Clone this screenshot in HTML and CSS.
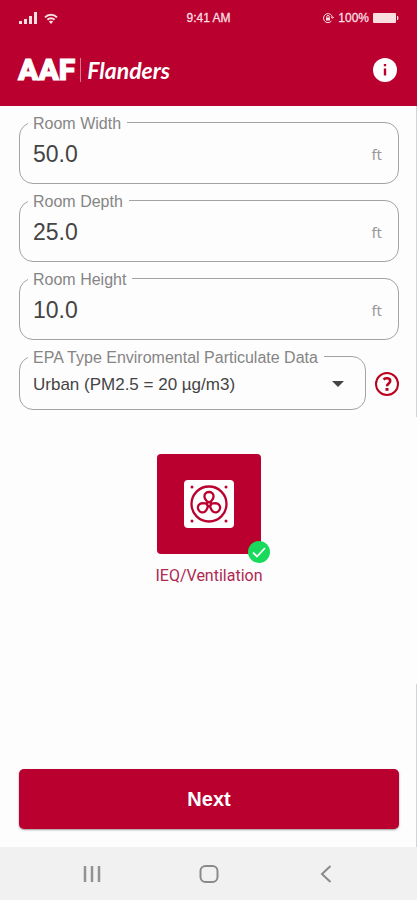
FILE: index.html
```
<!DOCTYPE html>
<html lang="en">
<head>
  <meta charset="UTF-8">
  <meta name="viewport" content="width=device-width, initial-scale=1">
  <title>AAF Flanders - Room Setup</title>
  <link rel="stylesheet" href="styles.css">
</head>
<body>
  <header>
    <div class="status-bar">
      <div class="status-left">
        <svg width="20" height="12" viewBox="0 0 20 12" fill="currentColor" aria-hidden="true">
          <rect x="1" y="9" width="3" height="3"/>
          <rect x="6" y="7" width="3" height="5"/>
          <rect x="11" y="4" width="3" height="8"/>
          <rect x="16" y="0" width="3" height="12"/>
        </svg>
        <svg width="14" height="11" viewBox="0 0 14 11" fill="none" stroke="currentColor" stroke-width="2" aria-hidden="true">
          <path d="M1 4.400C4.400.8 9.600.8 13 4.400"/>
          <path d="M3.400 6.800C5.500 4.800 8.500 4.800 10.600 6.800"/>
          <path d="M7 11L4.800 8.600C6 7.500 8 7.500 9.200 8.600Z" fill="currentColor" stroke="none"/>
        </svg>
      </div>
      <span class="time">9:41 AM</span>
      <div class="status-right">
        <svg width="12" height="12" viewBox="0 0 12 12" fill="none" stroke="currentColor" aria-hidden="true">
          <path d="M9.500 9A4.500 4.500 0 1 1 10.500 5.500M8.800 4.800L10.500 6.300L12 4.800"/>
          <rect x="4" y="5.500" width="4" height="3" fill="currentColor" stroke="none"/>
          <path d="M4.800 5.500V4.600A1.200 1.200 0 0 1 7.200 4.600V5.500"/>
        </svg>
        <span>100%</span>
        <svg width="26" height="10" viewBox="0 0 26 10" fill="currentColor" aria-hidden="true">
          <rect width="23" height="10" rx="1"/>
          <path d="M24 3H25Q26 5 25 7H24Z"/>
        </svg>
      </div>
    </div>
    <div class="title-bar">
      <div class="logo">
        <span class="logo-aaf">AAF</span>
        <span class="logo-flanders">Flanders</span>
      </div>
      <button class="icon-btn" type="button" aria-label="Info">
        <svg width="24" height="24" viewBox="0 0 24 24" aria-hidden="true">
          <circle cx="12" cy="12" r="12" fill="#fff"/>
          <path d="M10.800 6H13.200V8.300H10.800ZM10.800 10.500H13.200V17.500H10.800Z" fill="#ba002f"/>
        </svg>
      </button>
    </div>
  </header>

  <main>
    <fieldset class="field">
      <legend><label for="roomWidth">Room Width</label></legend>
      <input id="roomWidth" type="text" inputmode="decimal" value="50.0">
      <span class="unit">ft</span>
    </fieldset>
    <fieldset class="field">
      <legend><label for="roomDepth">Room Depth</label></legend>
      <input id="roomDepth" type="text" inputmode="decimal" value="25.0">
      <span class="unit">ft</span>
    </fieldset>
    <fieldset class="field">
      <legend><label for="roomHeight">Room Height</label></legend>
      <input id="roomHeight" type="text" inputmode="decimal" value="10.0">
      <span class="unit">ft</span>
    </fieldset>

    <div class="select-row">
      <fieldset class="field field-select">
        <legend><label for="epaType">EPA Type Enviromental Particulate Data</label></legend>
        <select id="epaType">
          <option>Urban (PM2.5 = 20 µg/m3)</option>
        </select>
        <svg class="arrow" width="12" height="6" viewBox="0 0 12 6" aria-hidden="true">
          <path d="M0 0H12L6 6Z" fill="#444"/>
        </svg>
      </fieldset>
      <button class="icon-btn help" type="button" aria-label="Help">
        <svg width="24" height="24" viewBox="0 0 24 24" fill="none" stroke="#ba0020" aria-hidden="true">
          <circle cx="12" cy="12" r="11" stroke-width="2"/>
          <path d="M8.500 7.400C10.500 5.800 15.200 5.600 15.200 8.900C15.200 11.500 12 11.400 12 14.300" stroke-width="2.600"/>
          <path d="M12 16V18.800" stroke-width="3"/>
        </svg>
      </button>
    </div>

    <button class="category" type="button" aria-pressed="true">
      <span class="tile">
        <svg width="50" height="48" viewBox="0 0 50 48" aria-hidden="true">
          <rect width="50" height="48" rx="4" fill="#fff"/>
          <g fill="#ba002f">
            <circle cx="8" cy="7" r="1.500"/>
            <circle cx="42" cy="7" r="1.500"/>
            <circle cx="8" cy="41" r="1.500"/>
            <circle cx="42" cy="41" r="1.500"/>
          </g>
          <g fill="none" stroke="#ba002f" stroke-width="2.300">
            <circle cx="25" cy="24" r="17.500"/>
            <path id="blade" d="M24 23C23.500 21 20.400 19.500 20.400 16.500C20.400 10.500 29.600 10.500 29.600 16.500C29.600 19.500 26.500 21 26 23"/>
            <use href="#blade" transform="rotate(120 25 24)"/>
            <use href="#blade" transform="rotate(240 25 24)"/>
            <circle cx="25" cy="24" r="2"/>
          </g>
        </svg>
        <svg class="check" width="22" height="22" viewBox="0 0 22 22" aria-hidden="true">
          <circle cx="11" cy="11" r="11" fill="#18db5b"/>
          <path d="M5 11.500L9 15.500L17 7" fill="none" stroke="#fff" stroke-width="1.800"/>
        </svg>
      </span>
      <span>IEQ/Ventilation</span>
    </button>

    <button class="next" type="button">Next</button>
  </main>

  <nav>
    <button type="button" aria-label="Recent apps">
      <svg width="20" height="18" viewBox="0 0 20 18" stroke="#929292" stroke-width="2.500" aria-hidden="true">
        <path d="M3 1V17M10 1V17M17 1V17"/>
      </svg>
    </button>
    <button type="button" aria-label="Home">
      <svg width="20" height="18" viewBox="0 0 20 18" fill="none" stroke="#8a8a8a" stroke-width="2" aria-hidden="true">
        <rect x="1.500" y="1" width="17" height="16" rx="5"/>
      </svg>
    </button>
    <button type="button" aria-label="Back">
      <svg width="20" height="18" viewBox="0 0 20 18" fill="none" stroke="#8a8a8a" stroke-width="2" aria-hidden="true">
        <path d="M14.500 1L6 9L14.500 17"/>
      </svg>
    </button>
  </nav>
</body>
</html>
```
FILE: styles.css
```
* {
  box-sizing: border-box;
}
body {
  margin: 0;
  min-height: 100vh;
  display: flex;
  flex-direction: column;
  background-color: #fdfdfd;
  color: #444;
  font-family: "Liberation Sans", Arial, sans-serif;
  font-size: 16px;
}
button {
  padding: 0;
  border: none;
  background: none;
  font-family: inherit;
  cursor: pointer;
}
svg {
  display: block;
}

/* Red header */
header {
  background-color: #ba002f;
  color: #fff;
  padding: 10px 18px 20px;
}
.status-bar {
  display: grid;
  grid-template-columns: 1fr auto 1fr;
  align-items: center;
  height: 16px;
  font-size: 12px;
  color: #fbdfe0;
  -webkit-text-stroke: 0.3px;
}
.status-left,
.status-right {
  display: flex;
  align-items: center;
  gap: 6px;
}
.status-right {
  justify-content: flex-end;
  gap: 4px;
}
.title-bar {
  display: flex;
  justify-content: space-between;
  align-items: center;
  height: 32px;
  margin-top: 28px;
}
.logo {
  display: flex;
  align-items: center;
  line-height: 24px;
}
.logo-aaf {
  font-family: Roboto, sans-serif;
  font-size: 30px;
  font-weight: 900;
  padding-right: 5px;
  -webkit-text-stroke: 1px;
}
.logo-flanders {
  font-family: Lato, sans-serif;
  font-size: 23px;
  font-style: italic;
  font-weight: bold;
  padding-left: 6px;
  border-left: 1px solid #d9788e;
}
.title-bar .icon-btn {
  margin-right: 2px;
}

/* Form */
main {
  flex: 1;
  display: flex;
  flex-direction: column;
  gap: 5px;
  padding: 5px 18px 18px 19px;
  /* thin screen edge, broken in the middle */
  background: linear-gradient(#cbd5de 42%, transparent 42% 78%, #cbd5de 78%) right / 1px 100% no-repeat;
}
.field {
  display: flex;
  align-items: center;
  min-width: 0;
  margin: 0;
  padding: 0 16px 8px 8px;
  border: 1px solid #a3a3a3;
  border-radius: 14px;
}
.field legend {
  padding: 4px 6px 0 5px;
  color: #858585;
  line-height: 18px;
}
.field input,
.field select {
  flex: 1;
  min-width: 0;
  padding: 0 5px;
  border: none;
  outline: none;
  background: none;
  color: #444;
  font-family: inherit;
}
.field input {
  height: 42px;
  font-size: 23px;
}
.unit {
  font-family: "Noto Sans", sans-serif;
  font-size: 15px;
  color: #999;
}
.select-row {
  display: flex;
  align-items: center;
  gap: 9px;
}
.field-select {
  flex: 1;
}
.field select {
  appearance: none;
  height: 34px;
  font-size: 17px;
}
.arrow {
  margin-right: 5px;
  pointer-events: none;
}
.help {
  margin-top: 12px;
}

/* Selected category */
.category {
  display: flex;
  flex-direction: column;
  align-items: center;
  gap: 12px;
  align-self: center;
  margin-top: 39px;
  color: #ad2950;
  font-family: Roboto, sans-serif;
  font-size: 16px;
}
.tile {
  position: relative;
  display: flex;
  justify-content: center;
  align-items: center;
  width: 104px;
  height: 100px;
  border-radius: 4px;
  background-color: #ba002f;
}
.check {
  position: absolute;
  right: -9px;
  bottom: -9px;
}

.next {
  height: 60px;
  margin-top: auto;
  border-radius: 5px;
  background-color: #ba002f;
  box-shadow: 0 1px 2px rgba(0, 0, 0, 0.4);
  color: #fff;
  font-size: 20px;
  font-weight: bold;
}

/* Phone navigation */
nav {
  display: flex;
  justify-content: center;
  gap: 97px;
  padding: 18px 0 17px;
  background-color: #f1f1f1;
}
```
